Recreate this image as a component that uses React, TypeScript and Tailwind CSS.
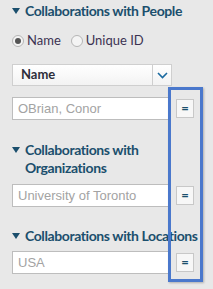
import { useState } from 'react';

const SectionTitle = ({ children }: { children: React.ReactNode }) => (
  <div className="flex items-start gap-[5px] whitespace-nowrap font-['Lato',sans-serif] text-[14px] font-bold leading-[18px] tracking-[-0.4px] text-[#1b4f6d]">
    <svg className="mt-[6px] shrink-0" width="8" height="6" viewBox="0 0 8 6" aria-hidden>
      <path d="M0 0h8L4 6z" fill="#1b4f6d" />
    </svg>
    <span>{children}</span>
  </div>
);

const EqualsButton = () => (
  <button
    type="button"
    className="flex h-[19px] w-[18px] shrink-0 items-center justify-center border border-[#c8c8c8] bg-[#f7f7f7] text-[13px] font-bold leading-none text-[#1b4f6d]"
  >
    =
  </button>
);

const FilterInput = ({ value }: { value: string }) => (
  <div className="flex items-center gap-[5px]">
    <div className="flex h-[23px] w-[159px] items-center border border-[#bdbdbd] bg-white px-[5px] font-['Liberation_Sans',sans-serif] text-[13px] text-[#a3a3a3]">
      {value}
    </div>
    <EqualsButton />
  </div>
);

const Radio = ({ checked, label, onClick }: { checked: boolean; label: string; onClick: () => void }) => (
  <button type="button" onClick={onClick} className="flex items-center gap-[3px]">
    <span className="flex h-[12px] w-[12px] items-center justify-center rounded-full border border-[#b5b5b5] bg-[#f4f4f4]">
      {checked ? <span className="h-[6px] w-[6px] rounded-full bg-[#555]" /> : null}
    </span>
    <span className="text-[13px] leading-none text-[#3c3352]">{label}</span>
  </button>
);

const App = () => {
  const [mode, setMode] = useState<'name' | 'id'>('name');

  return (
    <div className="relative h-[289px] w-[213px] overflow-hidden bg-[#e8e8e8] pl-[12px] pt-[2px] font-['Lato',sans-serif]">
      <SectionTitle>Collaborations with People</SectionTitle>

      <div className="mt-[14px] flex items-center gap-[10px]">
        <Radio checked={mode === 'name'} label="Name" onClick={() => setMode('name')} />
        <Radio checked={mode === 'id'} label="Unique ID" onClick={() => setMode('id')} />
      </div>

      <div className="mt-[17px] flex h-[22px] w-[160px] items-stretch border border-[#cfcfcf] bg-gradient-to-b from-white to-[#f3f3f3]">
        <span className="flex flex-1 items-center pl-[8px] text-[13px] font-bold text-[#2e2e3a]">Name</span>
        <span className="flex w-[19px] items-center justify-center border-l border-[#cfcfcf]">
          <svg width="11" height="7" viewBox="0 0 11 7" fill="none" aria-hidden>
            <path d="M1 1l4.5 4.5L10 1" stroke="#1a6aa0" strokeWidth="1.6" />
          </svg>
        </span>
      </div>

      <div className="mt-[11px]">
        <FilterInput value="OBrian, Conor" />
      </div>

      <div className="mt-[21px]">
        <SectionTitle>
          Collaborations with
          <br />
          Organizations
        </SectionTitle>
      </div>

      <div className="mt-[7px]">
        <FilterInput value="University of Toronto" />
      </div>

      <div className="mt-[20px]">
        <SectionTitle>Collaborations with Locations</SectionTitle>
      </div>

      <div className="mt-[6px]">
        <FilterInput value="USA" />
      </div>

      <div className="pointer-events-none absolute left-[168px] top-[87px] h-[195px] w-[35px] border-[3px] border-[#4a78cc] shadow-[1px_1px_2px_rgba(0,0,0,0.25)]" />
    </div>
  );
};

export default App;
